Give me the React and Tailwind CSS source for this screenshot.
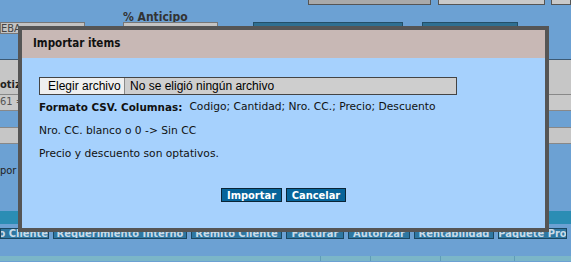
const verdana = { fontFamily: '"DejaVu Sans", Verdana, sans-serif' }
const condensed = { fontFamily: '"DejaVu Sans Condensed", "DejaVu Sans", sans-serif' }

const tabs = [
  { label: 'o Cliente', w: 'w-[49px]' },
  { label: 'Requerimiento Interno', w: 'w-[134px]' },
  { label: 'Remito Cliente', w: 'w-[91px]' },
  { label: 'Facturar', w: 'w-[58px]' },
  { label: 'Autorizar', w: 'w-[62px]' },
  { label: 'Rentabilidad', w: 'w-[80px]' },
  { label: 'Paquete Pro', w: 'w-[69px]' },
]

const Background = () => {
  return (
    <div className="flex flex-col text-[11px] text-[#333]" style={condensed}>
      <div className="flex h-[5px]">
        <div className="ml-[308px] w-[125px] h-[5px] bg-[#a9a9a9] border border-t-0 border-[#555]"></div>
        <div className="ml-[7px] w-[109px] h-[5px] bg-[#c9c9c9] border border-t-0 border-[#555]"></div>
        <div className="ml-[6px] w-[20px] h-[5px] bg-[#c9c9c9] border border-t-0 border-[#555]"></div>
      </div>
      <div className="h-[17px] pl-[123px] pt-[6px] font-bold leading-none text-[12px]">% Anticipo</div>
      <div className="flex h-[12px]">
        <div className="w-[85px] h-[12px] bg-[#c3c3c3] border border-[#777] overflow-hidden leading-[12px] text-[#444]">
          EBA
        </div>
        <div className="ml-[38px] w-[95px] h-[12px] bg-[#c4c4c4] border border-[#777]"></div>
        <div className="ml-[35px] w-[150px] h-[12px] bg-[#2f6f91] border border-[#234f68]"></div>
        <div className="ml-[19px] w-[96px] h-[12px] bg-[#2f6f91] border border-[#234f68]"></div>
      </div>
      <div className="h-[26px] border-b border-[#3d5a74]"></div>
      <div className="h-[34px] bg-[#c6c6c6] flex items-end pb-[1px] font-bold text-[#222]">otiz</div>
      <div className="h-[17px] bg-[#c9c9c9] border-y border-[#888] flex items-center text-[#555]">61 =</div>
      <div className="h-[16px]"></div>
      <div className="h-[17px] bg-[#c6c6c6] border-y border-[#888]"></div>
      <div className="h-[21px]"></div>
      <div className="h-[10px] leading-none text-[#222]">por</div>
      <div className="h-[36px]"></div>
      <div className="h-[13px] bg-[#2b8db4]"></div>
      <div className="h-[4px]"></div>
      <div className="flex gap-[4px] h-[11px]">
        {tabs.map((tab, index) => (
          <div
            key={index}
            className={`${tab.w} shrink-0 h-[11px] bg-[#2e77a1] border border-[#1c4761] overflow-hidden flex ${
              index === 0 ? 'justify-end' : 'justify-center'
            } leading-[10px] text-[11px] font-bold text-[#c9dbe8] whitespace-nowrap`}
          >
            {tab.label}
          </div>
        ))}
      </div>
      <div className="h-[17px]"></div>
      <div className="flex h-[5px] bg-[#7bb6c8]">
        <div className="w-[321px] border-r border-[#5f9db7]"></div>
        <div className="w-[50px] border-r border-[#5f9db7]"></div>
        <div className="w-[70px] border-r border-[#5f9db7]"></div>
        <div className="w-[74px] border-r border-[#5f9db7]"></div>
      </div>
    </div>
  )
}

const ImportDialog = () => {
  return (
    <div
      className="absolute left-[18px] top-[26px] w-[531px] h-[206px] border-4 border-[#555] bg-[#a6d1fd] flex flex-col"
      style={verdana}
    >
      <div
        className="h-[28px] shrink-0 bg-[#c8b8b5] pl-[11px] flex items-center text-[11.5px] font-bold text-[#111]"
        style={condensed}
      >
        Importar items
      </div>
      <div className="flex flex-col pl-[17px] pt-[19px] text-[10.7px] text-[#111]">
        <div
          className="flex items-center w-[418px] h-[18px] border border-[#444] bg-[#cecece] text-[12px] text-black"
          style={{ fontFamily: '"Liberation Sans", Arial, sans-serif' }}
        >
          <div className="w-[85px] h-full bg-[#efefef] border-r border-[#8a8a8a] pl-[8px] flex items-center">
            Elegir archivo
          </div>
          <span className="ml-[5px]">No se eligió ningún archivo</span>
        </div>
        <div className="mt-[6px] h-[13px] flex items-center">
          <span className="font-bold text-[10.4px]">Formato CSV. Columnas:</span>
          <span className="ml-[7px]">Codigo; Cantidad; Nro. CC.; Precio; Descuento</span>
        </div>
        <div className="mt-[11px] h-[13px] flex items-center">Nro. CC. blanco o 0 -&gt; Sin CC</div>
        <div className="mt-[10px] h-[13px] flex items-center">Precio y descuento son optativos.</div>
        <div className="mt-[27px] -ml-[17px] flex justify-center gap-[4px]" style={condensed}>
          <button className="w-[61px] h-[14px] bg-[#06649a] border border-[#0b2536] text-white text-[11px] font-bold leading-none flex items-center justify-center">
            Importar
          </button>
          <button className="w-[60px] h-[14px] bg-[#06649a] border border-[#0b2536] text-white text-[11px] font-bold leading-none flex items-center justify-center">
            Cancelar
          </button>
        </div>
      </div>
    </div>
  )
}

const App = () => {
  return (
    <div className="relative w-[571px] h-[262px] overflow-hidden bg-[#6ca1d3]">
      <Background />
      <ImportDialog />
    </div>
  )
}

export default App
